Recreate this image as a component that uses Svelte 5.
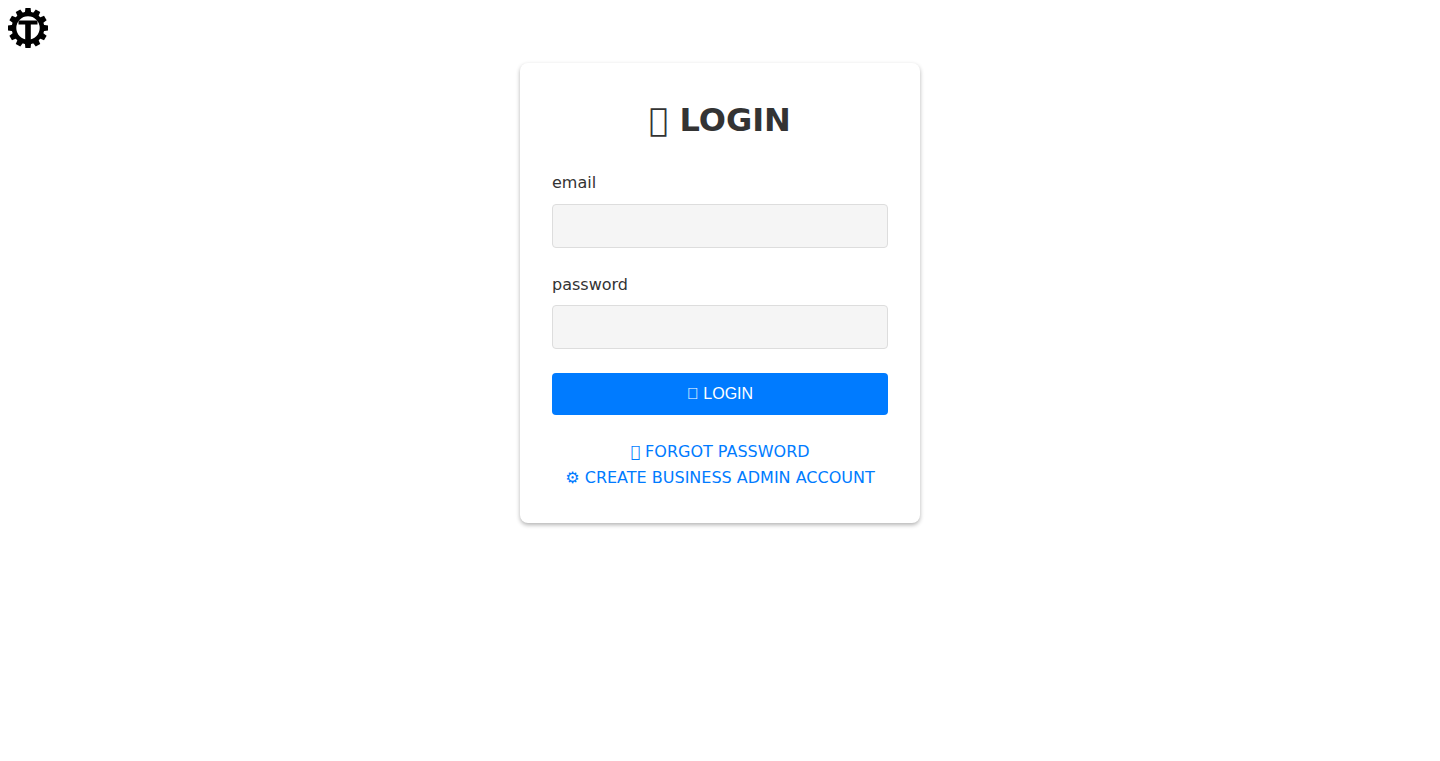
<script>
  let email = '';
  let password = '';

  const lockIcon = '\uF2F6';
  const keyIcon = '\uF2EA';
  const teeth = Array.from({ length: 12 }, (_, i) => i * 30);

  function handleLogin() {
    password = '';
  }
</script>

<svelte:head>
  <title>Login</title>
</svelte:head>

<header>
  <a class="logo" href="/" aria-label="Home">
    <svg width="40" height="40" viewBox="0 0 40 40" aria-hidden="true">
      {#each teeth as angle}
        <path d="M16.6 7 L17.4 0 H22.6 L23.4 7 Z" transform="rotate({angle} 20 20)" />
      {/each}
      <circle cx="20" cy="20" r="14" fill="none" stroke="#000" stroke-width="4.6" />
      <path d="M10.5 12.5 H29.5 V16.4 H22.8 V33 H17.2 V16.4 H10.5 Z" />
    </svg>
  </a>
</header>

<main>
  <div class="login-card">
    <h1>{lockIcon} LOGIN</h1>

    <form on:submit|preventDefault={handleLogin}>
      <div class="field">
        <label for="email">email</label>
        <input id="email" type="email" bind:value={email} required />
      </div>

      <div class="field">
        <label for="password">password</label>
        <input id="password" type="password" bind:value={password} required />
      </div>

      <button type="submit">{lockIcon} LOGIN</button>
    </form>

    <nav class="links">
      <a href="/forgot-password">{keyIcon} FORGOT PASSWORD</a>
      <a href="/create-account">⚙ CREATE BUSINESS ADMIN ACCOUNT</a>
    </nav>
  </div>
</main>

<style>
  :global(body) {
    margin: 0;
    background: #fff;
    color: #333;
    font-family: 'DejaVu Sans', sans-serif;
    font-size: 16px;
    line-height: 1.6;
  }

  header {
    display: flex;
    padding: 8px 8px 15px;
  }

  .logo {
    display: flex;
  }

  main {
    display: flex;
    justify-content: center;
    padding-bottom: 32px;
  }

  .login-card {
    box-sizing: border-box;
    width: 100%;
    max-width: 400px;
    padding: 32px;
    background: #fff;
    border-radius: 8px;
    box-shadow: 0 2px 4px rgba(0, 0, 0, 0.3);
  }

  h1 {
    margin: 0 0 24px;
    font-size: 32px;
    text-align: center;
  }

  .field {
    margin-bottom: 24px;
  }

  label {
    display: block;
    margin-bottom: 8px;
  }

  input {
    display: block;
    box-sizing: border-box;
    width: 100%;
    height: 44px;
    padding: 12px;
    border: 1px solid #ddd;
    border-radius: 4px;
    background: #f5f5f5;
    font-size: 16px;
  }

  button {
    display: block;
    width: 100%;
    padding: 12px;
    border: none;
    border-radius: 4px;
    background: #007bff;
    color: #fff;
    font-family: 'Liberation Sans', Arial, sans-serif;
    font-size: 16px;
    cursor: pointer;
  }

  button:hover {
    background: #0056b3;
  }

  .links {
    display: flex;
    flex-direction: column;
    align-items: center;
    margin-top: 24px;
  }

  .links a {
    color: #007bff;
    text-decoration: none;
  }

  .links a:hover {
    text-decoration: underline;
  }
</style>
